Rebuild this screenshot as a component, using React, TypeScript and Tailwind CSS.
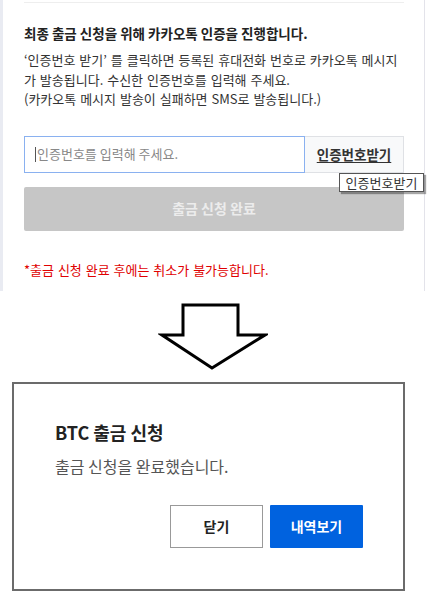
export default function App() {
    return (
        <div className="w-[430px] h-[613px] bg-white overflow-hidden font-['Noto_Sans_CJK_KR','Noto_Sans',sans-serif]">
            {/* 상단 인증 패널 */}
            <div className="flex h-[291px]">
                <div className="w-[3px] bg-[#e9ebf2]" />
                <div className="w-[422px] border-r border-[#e3e3ea] pl-[21px]">
                    <div className="relative w-[380px]">
                        <div className="mt-[2px] h-px bg-[#eeeeee]" />
                        <h2 className="mt-[21px] whitespace-nowrap text-[13.5px] leading-[18px] font-bold text-[#222]">
                            최종 출금 신청을 위해 카카오톡 인증을 진행합니다.
                        </h2>
                        <p className="mt-[8px] whitespace-nowrap text-[13px] leading-[19.5px] text-[#333] [word-spacing:1px]">
                            ‘인증번호 받기’ 를 클릭하면 등록된 휴대전화 번호로 카카오톡 메시지<br />
                            가 발송됩니다. 수신한 인증번호를 입력해 주세요.<br />
                            (카카오톡 메시지 발송이 실패하면 SMS로 발송됩니다.)
                        </p>

                        <div className="mt-[27px] flex h-[37px]">
                            <div className="flex flex-1 items-center border border-[#8ab1f0] pl-[10px]">
                                <span className="mr-px h-[15px] w-px bg-[#555]" />
                                <span className="text-[13px] text-[#888]">인증번호를 입력해 주세요.</span>
                            </div>
                            <button className="w-[99px] border border-l-0 border-[#dfe1e5] bg-[#f8f9fa] text-[13.5px] font-bold text-[#333] underline underline-offset-2">
                                인증번호받기
                            </button>
                        </div>

                        {/* 툴팁 */}
                        <div className="absolute left-[315px] top-[171px] z-10 h-[19px] w-[85px] border border-[#555] bg-white text-center text-[13px] leading-[17px] text-[#333] shadow-[2px_2px_1px_rgba(0,0,0,0.35)]">
                            인증번호받기
                        </div>

                        <button className="mt-[14px] h-[44px] w-full rounded-[2px] bg-[#c6c6c6] text-[14px] font-bold text-[#ececec]">
                            출금 신청 완료
                        </button>

                        <p className="mt-[30px] whitespace-nowrap text-[13px] leading-[18px] text-[#e00000] [word-spacing:1px]">
                            *출금 신청 완료 후에는 취소가 불가능합니다.
                        </p>
                    </div>
                </div>
            </div>

            {/* 화살표 */}
            <div className="h-[91px] pl-[158px] pt-[10px]">
                <svg width="110" height="70" viewBox="0 0 110 70">
                    <polygon
                        points="25,4 80,4 80,34 107,34 54,67 4,34 25,34"
                        fill="white"
                        stroke="black"
                        strokeWidth="3"
                        strokeLinejoin="miter"
                    />
                </svg>
            </div>

            {/* 완료 모달 */}
            <div className="ml-[12px] h-[209px] w-[393px] border-2 border-[#6b6b6b] pl-[41px] pr-[40px] pt-[36px]">
                <h3 className="text-[18px] leading-[24px] font-bold text-[#222]">BTC 출금 신청</h3>
                <p className="mt-[11px] text-[16px] leading-[22px] text-[#555]">출금 신청을 완료했습니다.</p>
                <div className="mt-[28px] flex justify-end gap-[7px]">
                    <button className="h-[43px] w-[93px] border border-[#999] bg-white text-[14px] font-bold text-[#222]">
                        닫기
                    </button>
                    <button className="h-[43px] w-[93px] rounded-[1px] bg-[#0062df] text-[14px] font-bold text-white">
                        내역보기
                    </button>
                </div>
            </div>
        </div>
    );
}
